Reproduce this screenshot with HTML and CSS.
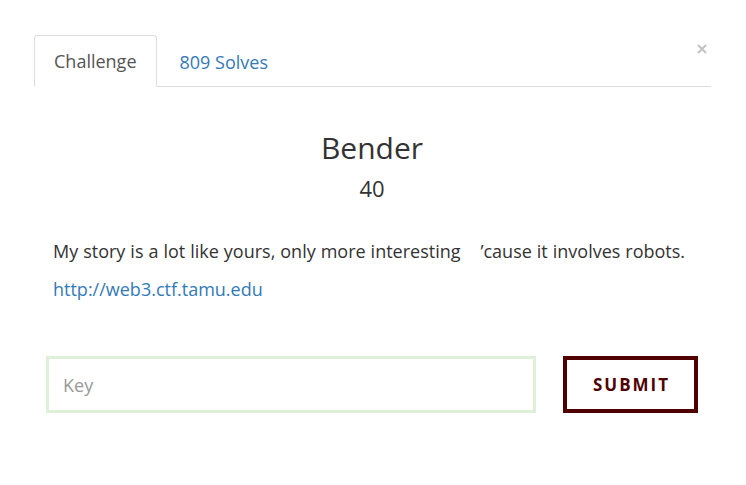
FILE: index.html
```html
<!DOCTYPE html>
<html>
<head>
<meta charset="utf-8">
<link rel="stylesheet" href="styles.css">
</head>
<body>
<div class="modal">
  <div class="nav">
    <div class="tab active">Challenge</div>
    <div class="tab link">809 Solves</div>
    <svg class="close" width="10" height="10" viewBox="0 0 10 10" aria-label="close"><path d="M1 1 L9 9 M9 1 L1 9" stroke="#c4c4c4" stroke-width="2.2" stroke-linecap="butt"/></svg>
  </div>
  <div class="body">
    <h2 class="title">Bender</h2>
    <div class="points">40</div>
    <p class="desc">My story is a lot like yours, only more interesting&nbsp;&nbsp;&nbsp;&nbsp;’cause it involves robots.</p>
    <p class="url"><a href="#">http://web3.ctf.tamu.edu</a></p>
    <form class="submit-row">
      <input class="key" type="text" placeholder="Key">
      <button class="btn" type="button">SUBMIT</button>
    </form>
  </div>
</div>
</body>
</html>
```
FILE: styles.css
```css
html, body {
  margin: 0;
  padding: 0;
  background: #fff;
}
body {
  font-family: "Open Sans", "Noto Sans", sans-serif;
  color: #333;
}
.modal {
  padding: 35px 35px 0 34px;
}
.nav {
  display: flex;
  align-items: flex-end;
  border-bottom: 1px solid #ddd;
  height: 51px;
  position: relative;
}
.tab {
  font-size: 18px;
  height: 51px;
  box-sizing: border-box;
  display: flex;
  align-items: center;
  padding: 0 19px;
  margin-bottom: -1px;
  border: 1px solid transparent;
  border-radius: 4px 4px 0 0;
}
.tab.active {
  border-color: #ddd;
  border-bottom-color: #fff;
  background: #fff;
  color: #555;
  height: 52px;
}
.tab.link {
  color: #337ab7;
  padding-left: 22px;
}
.close {
  position: absolute;
  right: 4px;
  top: 9px;
}
.body {
  padding: 0 13px 0 12px;
}
.title {
  margin: 43px 0 0;
  text-align: center;
  font-weight: 400;
  font-size: 30px;
  line-height: 36px;
  color: #333;
}
.points {
  text-align: center;
  font-size: 22px;
  line-height: 30px;
  margin-top: 7px;
}
.desc {
  margin: 36px 0 0 7px;
  font-size: 18px;
  line-height: 24px;
  color: #333;
  word-spacing: 0.3px;
}
.url {
  margin: 14px 0 0 7px;
  font-size: 18px;
  line-height: 24px;
}
.url a {
  color: #337ab7;
  text-decoration: none;
}
.submit-row {
  display: flex;
  gap: 27px;
  margin-top: 55px;
}
.key {
  flex: 0 0 490px;
  height: 57px;
  box-sizing: border-box;
  border: 3px solid #dff0d8;
  padding: 0 14px;
  font-size: 18px;
  font-family: inherit;
  color: #555;
  outline: none;
}
.key::placeholder {
  color: #999;
}
.btn {
  width: 135px;
  height: 57px;
  box-sizing: border-box;
  border: 4px solid #500000;
  background: #fff;
  color: #500000;
  font-family: "Open Sans", sans-serif;
  font-weight: 700;
  font-size: 17px;
  letter-spacing: 2px;
  padding: 0 0 0 2px;
  cursor: pointer;
}
```
